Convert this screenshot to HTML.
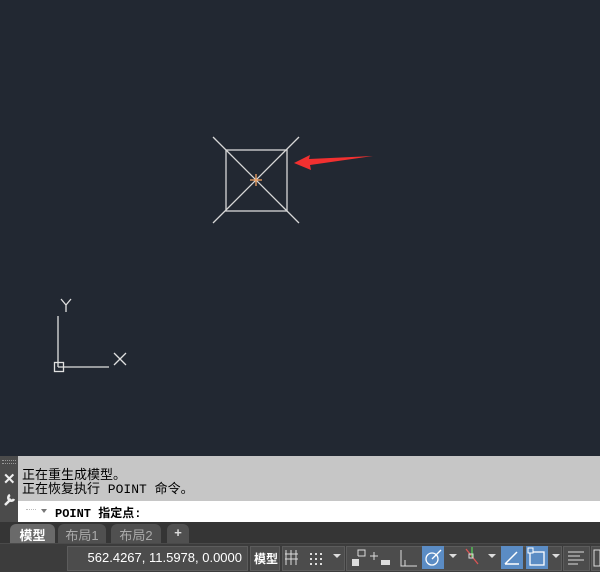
<!DOCTYPE html>
<html><head><meta charset="utf-8"><style>
*{margin:0;padding:0;box-sizing:border-box}
body{width:600px;height:572px;overflow:hidden;background:#222832;position:relative;font-family:"Liberation Sans","Noto Sans CJK SC",sans-serif}
.abs{position:absolute}
.cmd{left:18px;top:456px;width:582px;height:45px;background:#c6c6c6;font-family:"Liberation Mono","Noto Sans CJK SC",monospace;font-size:13px;color:#000;padding:13px 0 0 4px;line-height:14px}
.strip{left:0;top:456px;width:18px;height:66px;background:#4b4b4b}
.inp{left:18px;top:501px;width:582px;height:21px;background:#fff;font-family:"Liberation Mono","Noto Sans CJK SC",monospace;font-size:12px;font-weight:bold;padding:3px 0 0 37px}
.tabs{left:0;top:522px;width:600px;height:21px;background:#353535}
.tab{top:2px;height:19px;background:#505050;color:#aaa;font-size:13px;padding:1px 0 0 0;text-align:center;border-radius:6px 6px 0 0}
.status{left:0;top:543px;width:600px;height:29px;background:#3c3c3c;border-top:1px solid #4a4a4a}
.btn{top:546px;height:25px;background:#4c4c4c;border:1px solid #5c5c5c}
</style></head><body>
<svg class="abs" style="left:0;top:0" width="600" height="456">
<g stroke="#d8d8d8" stroke-width="1.3" fill="none">
<rect x="226" y="150" width="61" height="61"/>
<line x1="213" y1="137" x2="299" y2="223"/>
<line x1="299" y1="137" x2="213" y2="223"/>
</g>
<g stroke="#f0a060" stroke-width="1.3"><line x1="250" y1="180" x2="262" y2="180"/><line x1="256" y1="174" x2="256" y2="186"/></g>
<polygon points="294,163 310,155 309,159 373,156 310,165 311,170" fill="#f23030"/>
<g stroke="#e0e0e0" stroke-width="1.3" fill="none">
<line x1="58" y1="316" x2="58" y2="367"/><line x1="58" y1="367" x2="109" y2="367"/>
<rect x="54.5" y="362.5" width="9" height="9"/>
<path d="M61 299 L66 305 L71 299 M66 305 L66 312"/>
<path d="M114 353 L126 365 M126 353 L114 365"/>
</g>
</svg>
<div class="abs strip"><div style="position:absolute;left:2px;top:4px;width:14px;height:4px;border-top:1px dotted #999;border-bottom:1px dotted #999"></div>
<div style="position:absolute;left:3px;top:14px;color:#eee;font-size:15px;font-weight:bold">✕</div>
<svg style="position:absolute;left:2px;top:37px" width="14" height="14"><path d="M3 12 L9 6 M8 2 a3 3 0 1 0 4 4" stroke="#eee" stroke-width="2.5" fill="none"/></svg></div>
<div class="abs cmd">正在重生成模型。<br>正在恢复执行 POINT 命令。</div>
<div class="abs inp">POINT 指定点:</div>
<div class="abs" style="left:26px;top:509px;width:10px;height:6px;border-top:1px dotted #bbb"></div>
<div class="abs" style="left:41px;top:509px;border:3px solid transparent;border-top:4px solid #777"></div>
<div class="abs tabs">
<div class="abs tab" style="left:10px;width:45px;background:#6a6a6a;color:#fff;font-weight:bold">模型</div>
<div class="abs tab" style="left:58px;width:48px">布局1</div>
<div class="abs tab" style="left:111px;width:50px">布局2</div>
<div class="abs tab" style="left:167px;width:22px;color:#ddd;font-weight:bold">+</div>
</div>
<div class="abs status"></div>
<div class="abs btn" style="left:67px;width:181px;color:#fff;font-size:13px;text-align:right;padding:3px 5px 0 0">562.4267, 11.5978, 0.0000</div>
<div class="abs btn" style="left:250px;width:30px;color:#fff;font-size:12px;font-weight:bold;padding:3px 0 0 3px">模型</div>
<div class="abs btn" style="left:282px;width:63px"></div>
<div class="abs btn" style="left:346px;width:216px"></div>
<div class="abs btn" style="left:563px;width:27px"></div>
<div class="abs btn" style="left:591px;width:12px"></div>
<svg class="abs" style="left:0;top:543px" width="600" height="29">
<g stroke="#ddd" stroke-width="1" fill="none">
<path d="M286 7v15M291 7v15M296 7v15M285 11h13M285 16h13"/>
<path d="M358 13v-6h7v6h-7"/>
<path d="M374 9v8M370 13h8"/>
<path d="M401 7v16h16M405 17v6"/>
<path d="M568 9h16M568 13h12M568 17h16M568 21h10"/>
</g>
<g fill="#ddd"><rect x="352" y="16" width="7" height="7"/><rect x="381" y="17" width="9" height="5"/>
<path d="M310 10h2v2h-2zM315 10h2v2h-2zM320 10h2v2h-2zM310 15h2v2h-2zM315 15h2v2h-2zM320 15h2v2h-2zM310 20h2v2h-2zM315 20h2v2h-2zM320 20h2v2h-2z"/>
<path d="M333 11h8l-4 4z M449 11h8l-4 4z M488 11h8l-4 4z M552 11h8l-4 4z"/></g>
<rect x="422" y="3" width="22" height="23" fill="#5b8cc4"/>
<circle cx="432" cy="16" r="6" stroke="#fff" fill="none" stroke-width="1.3"/><path d="M432 16l9-9" stroke="#fff" stroke-width="1.3"/>
<path d="M466 6l12 15" stroke="#d55" stroke-width="1.3"/><path d="M472 4v10" stroke="#5c5" stroke-width="1.3"/><rect x="469" y="11" width="4" height="4" fill="none" stroke="#ddd"/>
<rect x="501" y="3" width="22" height="23" fill="#5b8cc4"/>
<path d="M505 21h14M505 21l12-12" stroke="#fff" stroke-width="1.5"/>
<rect x="526" y="3" width="22" height="23" fill="#5b8cc4"/>
<rect x="530" y="9" width="14" height="13" stroke="#fff" fill="none" stroke-width="1.3"/><rect x="528" y="5" width="5" height="5" stroke="#fff" fill="#5b8cc4"/>
<path d="M594 7h6v16h-6z" stroke="#ddd" fill="none"/>
</svg>
</body></html>
